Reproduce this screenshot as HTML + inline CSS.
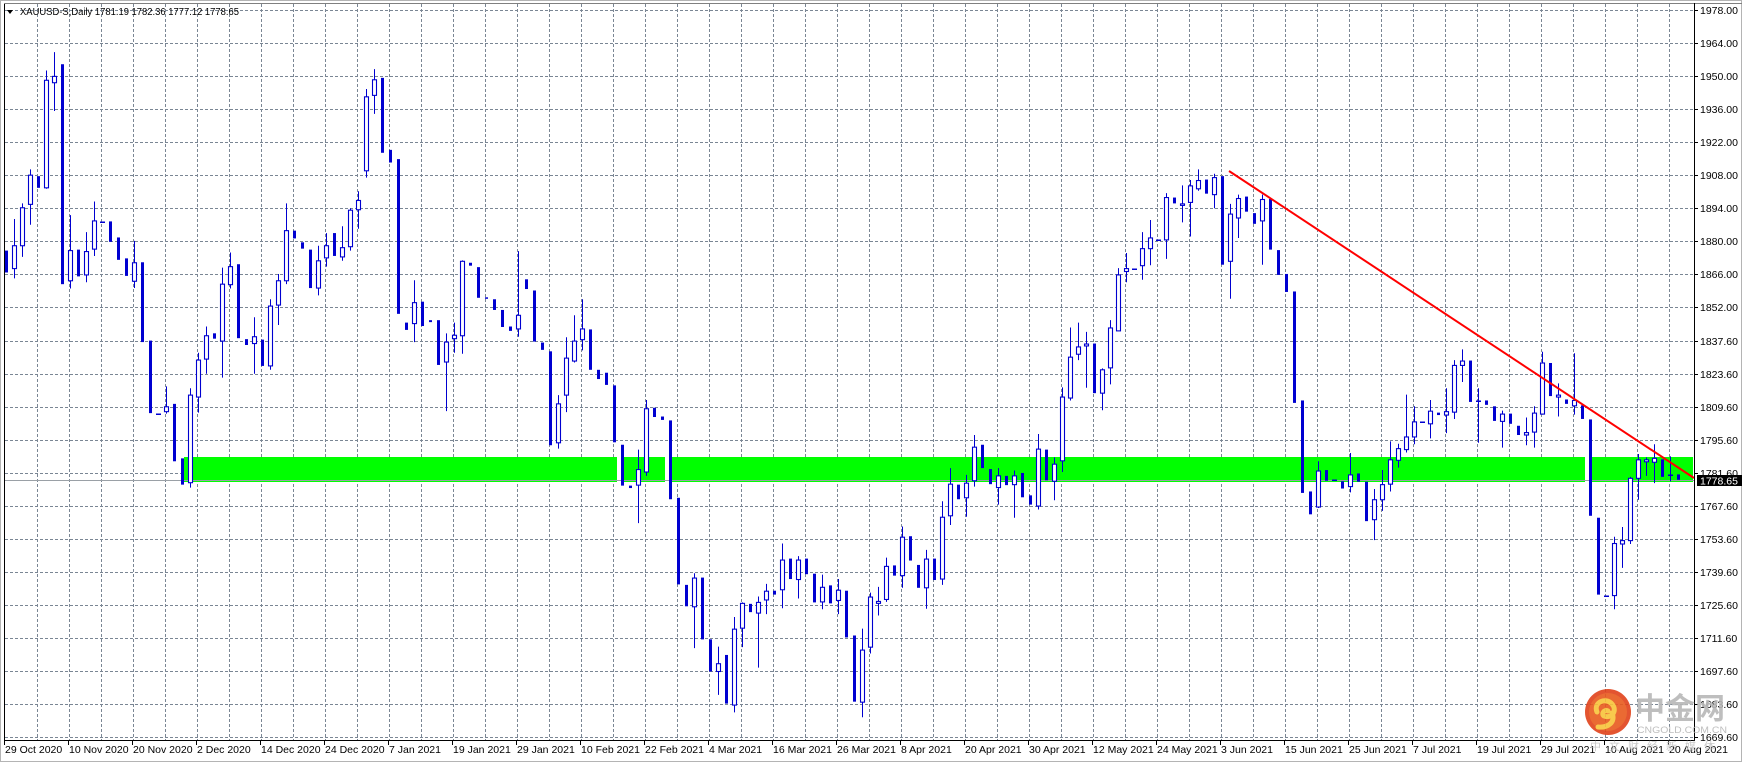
<!DOCTYPE html>
<html><head><meta charset="utf-8"><style>
html,body{margin:0;padding:0;background:#fff;width:1742px;height:762px;overflow:hidden}
svg{display:block}
text{font-family:"Liberation Sans","Noto Sans CJK SC",sans-serif}
</style></head><body>
<svg id="c" width="1742" height="762" xmlns="http://www.w3.org/2000/svg">
<rect x="0" y="0" width="1742" height="762" fill="#fff"/>
<rect x="0.5" y="0.5" width="1741" height="761" fill="none" stroke="#b4b4b4"/>
<g id="grid"></g>
<rect x="184" y="457" width="1509" height="25" fill="#00ff00"/>
<rect x="617" y="457" width="7" height="25" fill="#fff"/>
<rect x="665" y="457" width="7" height="25" fill="#fff"/>
<rect x="1585" y="457" width="7" height="25" fill="#fff"/>
<line x1="5" y1="480.5" x2="1694" y2="480.5" stroke="#9aa0a6" stroke-width="1"/>
<g id="candles"></g>
<line x1="1229" y1="171" x2="1694" y2="478" stroke="#ff0000" stroke-width="2"/>
<line x1="4.5" y1="3" x2="4.5" y2="740" stroke="#000"/>
<line x1="4" y1="3.5" x2="1742" y2="3.5" stroke="#808080"/>
<line x1="1694.5" y1="3" x2="1694.5" y2="741" stroke="#000"/>
<line x1="4" y1="740.5" x2="1695" y2="740.5" stroke="#000"/>
<g id="axis" font-size="10.5" fill="#000"></g>
<polygon points="7,10 13,10 10,14" fill="#000"/>
<text x="20" y="15" font-size="10" textLength="219" lengthAdjust="spacingAndGlyphs" fill="#000">XAUUSD-S,Daily  1781.19 1782.36 1777.12 1778.65</text>
<rect x="1697" y="475" width="45" height="11" fill="#000"/>
<text x="1700" y="484.5" font-size="10.5" fill="#fff">1778.65</text>
<g opacity="0.9">
<circle cx="1608" cy="712" r="23" fill="#e0421a"/>
<circle cx="1608" cy="712" r="19" fill="#e85a1e"/>
<path d="M1597,712 C1593,702 1606,697 1612,704 C1618,711 1611,719 1604,716 C1601,714 1604,709 1608,711 M1612,713 C1616,722 1608,728 1598,727" stroke="#f8c43a" stroke-width="5" fill="none" stroke-linecap="round"/>
<text x="1635" y="719" font-size="30" fill="#b8b8b8" font-weight="bold" font-family="Noto Sans CJK SC, sans-serif">中金网</text>
<text x="1637" y="733" font-size="9" fill="#b8b8b8" textLength="90" lengthAdjust="spacingAndGlyphs">CNGOLD.COM.CN</text>
<text x="1590" y="750" font-size="11" fill="#c4c4c4" letter-spacing="8" font-family="Noto Sans CJK SC, sans-serif">中文财经新媒体</text>
</g>
</svg>
<script>
(function(){
var NS="http://www.w3.org/2000/svg";
function el(p,n,a){var e=document.createElementNS(NS,n);for(var k in a)e.setAttribute(k,a[k]);p.appendChild(e);return e;}
var g=document.getElementById('grid');
for(var k=0;k<=22;k++){var y=Math.round(10+33.05*k)+0.5;el(g,'line',{x1:5,y1:y,x2:1694,y2:y,stroke:'#7a8694','stroke-dasharray':'3,2','stroke-width':1});}
for(var x=37;x<1694;x+=32){el(g,'line',{x1:x+0.5,y1:4,x2:x+0.5,y2:740,stroke:'#7a8694','stroke-dasharray':'3,2','stroke-width':1});}
var ax=document.getElementById('axis');
var pl=["1978.00","1964.00","1950.00","1936.00","1922.00","1908.00","1894.00","1880.00","1866.00","1852.00","1837.60","1823.60","1809.60","1795.60","1781.60","1767.60","1753.60","1739.60","1725.60","1711.60","1697.60","1683.60","1669.60"];
for(var k=0;k<pl.length;k++){var y=Math.round(10+33.05*k);el(ax,'line',{x1:1694,y1:y+0.5,x2:1698,y2:y+0.5,stroke:'#000'});var t=el(ax,'text',{x:1700,y:y+4});t.textContent=pl[k];}
var dl=["29 Oct 2020","10 Nov 2020","20 Nov 2020","2 Dec 2020","14 Dec 2020","24 Dec 2020","7 Jan 2021","19 Jan 2021","29 Jan 2021","10 Feb 2021","22 Feb 2021","4 Mar 2021","16 Mar 2021","26 Mar 2021","8 Apr 2021","20 Apr 2021","30 Apr 2021","12 May 2021","24 May 2021","3 Jun 2021","15 Jun 2021","25 Jun 2021","7 Jul 2021","19 Jul 2021","29 Jul 2021","10 Aug 2021","20 Aug 2021"];
for(var k=0;k<dl.length;k++){var x=4+64*k;el(ax,'line',{x1:x+0.5,y1:740,x2:x+0.5,y2:745,stroke:'#000'});var t=el(ax,'text',{x:x+1,y:753});t.textContent=dl[k];}
var D="d515,560;u505,552,450,572;u427,505,418,528;u360,420,348,462;d362,386;u165,386,145,388;u157,170,107,228;d132,584;u515,577,442,593;d513,568;u517,565,477,580;u454,512,414,526;x456;d455,497;d488,534;d531,567;u540,578,495,592;d539,703;d700,849;x850;u836,846,794,850;d830,948;d942,996;u812,992,798,1002;u740,816,725,848;u690,738,671,768;d685,696;u584,701,550,776;u548,585,519,593;d543,695;d697,709;u692,706,652,768;d698,752;u629,752,615,760;u577,627,563,668;u474,577,418,584;d474,490;d498,511;d513,592;u536,592,505,607;u505,530,479,548;d479,526;u509,528,465,536;u432,507,428,515;u412,431,393,470;u199,351,183,365;u164,196,142,234;d160,314;d308,334;d327,645;d663,678;u622,665,576,703;d620,670;d658,662;d658,750;"+
"u703,744,685,845;u689,696,663,725;u537,690,535,727;d540,546;d549,612;d611,614;d615,637;d637,672;d671,680;u648,676,516,692;d574,594;d597,702;d704,719;d722,915;u830,910,812,922;u736,812,693,847;u701,742,648,745;u676,698,615,720;d677,760;d760,779;d766,791;d792,909;d914,998;d998,1003;u965,997,924,1075;u840,970,822,978;d838,857;d856,863;d864,1026;d1023,1201;d1202,1246;u1188,1247,1178,1332;d1187,1314;d1314,1380;u1364,1380,1329,1428;d1346,1446;u1293,1449,1268,1464;u1240,1291,1238,1330;d1241,1258;u1238,1260,1226,1372;u1215,1233,1200,1262;d1214,1222;u1151,1212,1117,1250;d1148,1190;u1151,1191,1143,1230;d1148,1180;d1179,1238;u1207,1237,1181,1252;d1203,1240;u1213,1234,1190,1262;d1214,1310;d1306,1442;u1336,1443,1292,1474;"+
"u1227,1330,1218,1343;u1236,1240,1206,1265;u1164,1232,1146,1237;d1162,1183;u1104,1183,1082,1208;d1102,1152;d1161,1208;u1149,1208,1130,1251;d1148,1192;u1063,1190,1030,1202;u995,1060,962,1079;d996,1026;u993,1023,976,1062;u919,988,894,1000;d914,962;d964,995;u978,1002,962,1037;d978,997;u978,996,967,1064;d972,1022;d1018,1037;u923,1040,892,1047;d924,987;u954,989,940,1028;u816,947,796,970;u734,818,673,823;u713,728,663,740;u707,711,682,797;d706,808;u760,808,757,843;u674,756,658,790;u565,680,551,680;u552,558,520,580;x552;u511,546,477,575;u489,511,452,545;x494;u406,493,397,532;d406,418;u419,421,381,457;u382,416,370,486;u371,388,348,392;d369,398;u365,400,357,428;d362,544;u440,537,419,614;u408,448,400,489;d404,435;d438,460;u410,454,400,544;d409,513;d514,565;d563,600;d599,828;"+
"d823,1013;d1010,1057;u968,1042,948,1044;d966,988;x986;d989,1004;u976,1000,931,1012;d973,990;d990,1071;u1027,1068,1005,1110;u996,1027,966,1050;u945,995,907,1010;u922,946,912,961;u898,924,811,930;u867,898,835,913;x868;u845,871,822,901;d848,853;u846,853,798,890;u751,847,740,861;u742,751,718,785;d741,826;x825,798,910;d823,832;d835,865;u851,866,844,920;d850,871;d875,894;u889,894,858,915;u849,888,835,920;u746,851,723,852;d746,814;u812,816,788,856;d821,830;u823,834,726,852;d833,861;d862,1060;d1064,1222;x1225;u1117,1224,1103,1252;u1111,1118,1083,1167;u983,1111,980,1118;u945,983,933,1027;u945,949,940,978;u942,950,913,993;d944,980;x977,938,989;d975,986";
var S=762/1566, B='#0000d0';
var cg=document.getElementById('candles');
var arr=D.split(';');
for(var i=0;i<arr.length;i++){
 var s=arr[i];if(!s)continue;var t=s[0];var v=s.slice(1).split(',').map(function(a){return parseFloat(a)*S;});
 var c=Math.round(5.5+8*i);
 if(t==='x'){
  if(v.length>1)el(cg,'line',{x1:c+0.5,y1:v[1],x2:c+0.5,y2:v[2],stroke:B});
  el(cg,'rect',{x:c-2,y:Math.round(v[0])-0.5,width:5,height:1.5,fill:B});
 } else if(t==='u'){
  if(v.length>2)el(cg,'line',{x1:c+0.5,y1:v[2],x2:c+0.5,y2:v[3],stroke:B});
  var h=Math.max(v[1]-v[0],1.5);
  el(cg,'rect',{x:c-1.5,y:v[0],width:4,height:h,fill:'#fff',stroke:B,'stroke-width':1.1});
 } else {
  if(v.length>2)el(cg,'line',{x1:c+0.5,y1:v[2],x2:c+0.5,y2:v[3],stroke:B});
  var h=Math.max(v[1]-v[0],1.5);
  el(cg,'rect',{x:c-1,y:v[0],width:3,height:h,fill:B});
 }
}
})();
</script>
</body></html>
